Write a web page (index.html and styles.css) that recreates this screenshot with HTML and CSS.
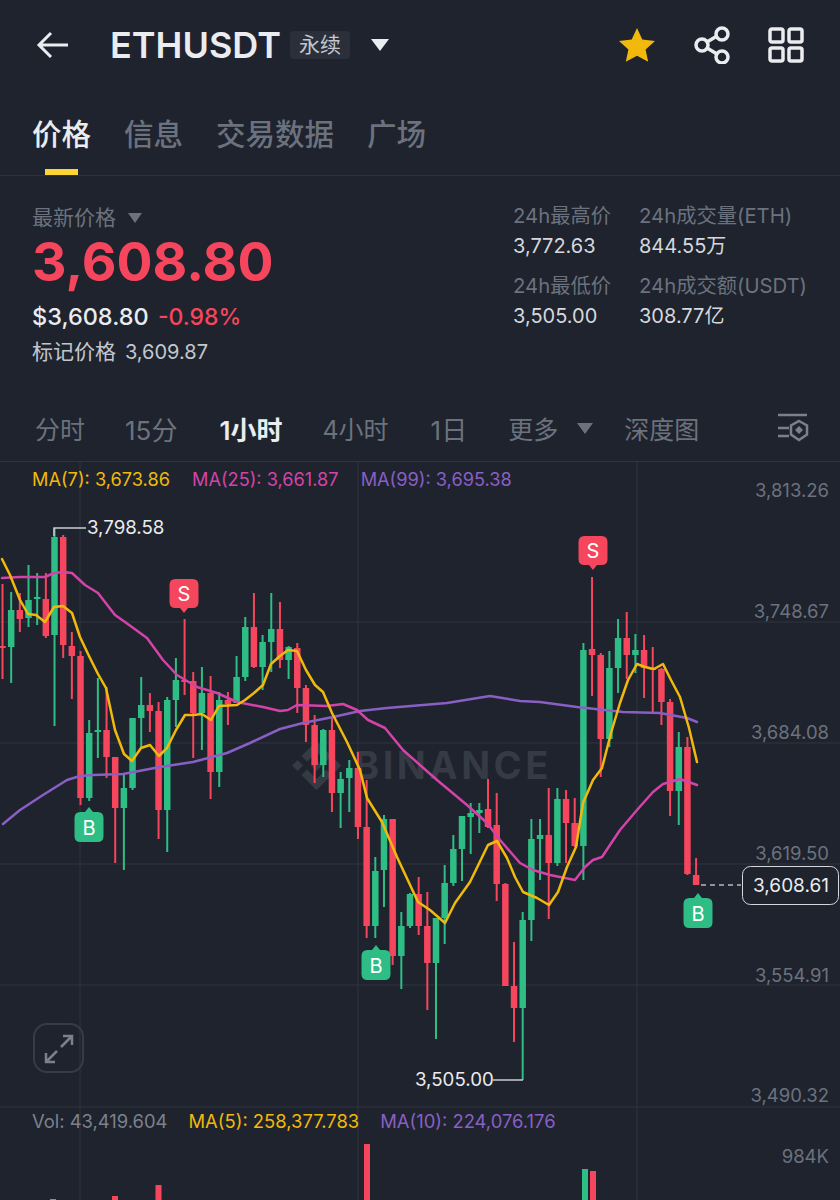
FILE: index.html
```html
<!DOCTYPE html>
<html lang="zh-CN">
<head>
    <meta charset="UTF-8">
    <meta name="viewport" content="width=device-width, initial-scale=1.0">
    <title>ETHUSDT</title>
    <link rel="stylesheet" href="styles.css">
</head>
<body>
    <header class="topbar">
        <svg class="back" width="34" height="28" viewBox="0 0 34 28">
            <path d="M32 14H3M15 2L3 14l12 12"/>
        </svg>
        <span class="symbol">ETHUSDT</span>
        <span class="badge">永续</span>
        <span class="caret caret-title"></span>
        <div class="topbar-icons">
            <svg width="38" height="36" viewBox="0 0 38 36">
                <path class="star" d="M19 1l5.300 11.500 12.700 1.400-9.400 8.500 2.600 12.400L19 28.700 7.800 34.800l2.600-12.400L1 13.900l12.700-1.400z"/>
            </svg>
            <svg class="line-icon" width="38" height="38" viewBox="0 0 38 38">
                <circle cx="29" cy="8" r="6"/>
                <circle cx="9" cy="19" r="6"/>
                <circle cx="29" cy="31" r="6"/>
                <path d="M14 16l10-6M14 22l10 6"/>
            </svg>
            <svg class="line-icon" width="36" height="36" viewBox="0 0 36 36">
                <rect x="2" y="2" width="13" height="13" rx="2"/>
                <rect x="21" y="2" width="13" height="13" rx="2"/>
                <rect x="2" y="21" width="13" height="13" rx="2"/>
                <rect x="21" y="21" width="13" height="13" rx="2"/>
            </svg>
        </div>
    </header>

    <nav class="tabs">
        <a class="tab active">价格</a>
        <a class="tab">信息</a>
        <a class="tab">交易数据</a>
        <a class="tab">广场</a>
    </nav>

    <section class="summary">
        <div class="summary-left">
            <div class="last-label">最新价格 <span class="caret caret-small"></span></div>
            <div class="last-price">3,608.80</div>
            <div class="fiat">$3,608.80 <span class="change">-0.98%</span></div>
            <div class="mark">标记价格 <span>3,609.87</span></div>
        </div>
        <div class="stats">
            <div class="stat"><span class="stat-label">24h最高价</span><span class="stat-value">3,772.63</span></div>
            <div class="stat"><span class="stat-label">24h成交量(ETH)</span><span class="stat-value">844.55万</span></div>
            <div class="stat"><span class="stat-label">24h最低价</span><span class="stat-value">3,505.00</span></div>
            <div class="stat"><span class="stat-label">24h成交额(USDT)</span><span class="stat-value">308.77亿</span></div>
        </div>
    </section>

    <nav class="intervals">
        <a class="interval i-1">分时</a>
        <a class="interval i-2">15分</a>
        <a class="interval i-3 active">1小时</a>
        <a class="interval i-4">4小时</a>
        <a class="interval i-5">1日</a>
        <a class="interval i-6">更多</a>
        <span class="caret caret-more"></span>
        <a class="interval i-7">深度图</a>
        <svg class="depth-icon" width="32" height="30" viewBox="0 0 32 30">
            <path d="M1 2h29M1 15h11M1 23h11"/>
            <path d="M22 8l8 4.500v9L22 27l-8-5.500v-9z"/>
            <path class="depth-dot" d="M22 13l4 4-4 4-4-4z"/>
        </svg>
    </nav>

    <section class="chart">
        <svg id="chartSvg" class="chart-svg" width="840" height="738" viewBox="0 462 840 738">
            <g class="grid">
                <path d="M0 622H840M0 743H840M0 864H840M0 985H840M0 1107H840M80 462V1200M358 462V1200M637 462V1200"/>
            </g>

            <g class="watermark">
                <path transform="translate(292 741) scale(2.05)" d="M16.624 13.9202l2.7175 2.7154-7.353 7.353-7.353-7.352 2.7175-2.7164 4.6355 4.6595 4.6356-4.6595zm4.6366-4.6366L24 12l-2.7154 2.7164L18.5682 12l2.6924-2.7164zm-9.272.001l2.7163 2.6914-2.7164 2.7174v-.001L9.2721 12l2.7164-2.7154zm-9.2722-.001L5.4088 12l-2.6914 2.6924L0 12l2.7164-2.7164zM11.9885.0115l7.353 7.329-2.7174 2.7154-4.6356-4.6356-4.6355 4.6595-2.7174-2.7154 7.353-7.353z"/>
                <text x="354" y="779">BINANCE</text>
            </g>

            <g id="candles"></g>

            <polyline class="ma ma-99" points="3,824 20,810 43,795 67,780 80,776 93,775 123,774 160,767 193,762 227,753 250,743 280,729 303,723 333,717 360,711 387,708 447,703 490,696 520,701 540,702 577,707 623,712 660,713 687,718 697,722"/>
            <polyline class="ma ma-25" points="2,578 20,577 45,577 54,573 63,572 72,573 85,585 98,593 115,615 125,622 147,638 163,660 177,675 197,687 217,693 237,702 263,707 280,711 288,710 297,705 327,706 343,704 357,710 368,720 385,728 403,750 437,780 467,805 487,823 500,840 520,863 533,870 550,875 575,880 585,867 593,860 602,857 620,830 637,810 653,792 663,784 680,779 697,785"/>
            <polyline class="ma ma-7" points="2,559 10,575 20,600 28,614 36,615 45,622 54,607 63,606 72,613 80,637 89,656 98,674 106,688 115,730 124,754 132,761 141,748 150,745 159,756 167,748 176,730 185,715 193,715 202,714 211,720 219,706 237,705 245,700 254,693 263,685 271,664 280,656 288,650 297,651 306,670 315,685 323,692 332,713 347,742 360,770 367,798 382,822 397,857 418,902 430,910 445,923 455,903 470,882 488,845 497,841 507,858 515,877 523,892 537,898 549,905 558,892 567,867 576,847 583,803 593,780 602,768 611,733 620,703 628,680 637,664 645,667 654,669 663,664 671,680 680,697 689,728 697,762"/>

            <path class="leader" d="M54 536V528H86"/>
            <text class="extreme" x="87" y="534">3,798.58</text>
            <path class="leader" d="M493 1080H523"/>
            <text class="extreme" x="415" y="1086">3,505.00</text>

            <g class="axis">
                <text x="829" y="497">3,813.26</text>
                <text x="829" y="618">3,748.67</text>
                <text x="829" y="739">3,684.08</text>
                <text x="829" y="860">3,619.50</text>
                <text x="829" y="982">3,554.91</text>
                <text x="829" y="1102">3,490.32</text>
                <text x="829" y="1163">984K</text>
            </g>

            <path class="price-dash" d="M701 885H741"/>
            <rect class="price-box" x="742.500" y="866.500" width="96" height="38" rx="8"/>
            <text class="price-text" x="791" y="892">3,608.61</text>

            <g id="markers"></g>
        </svg>

        <div class="legend legend-price">
            <span class="ma-7-text">MA(7): 3,673.86</span>
            <span class="ma-25-text">MA(25): 3,661.87</span>
            <span class="ma-99-text">MA(99): 3,695.38</span>
        </div>
        <div class="legend legend-vol">
            <span class="vol-text">Vol: 43,419.604</span>
            <span class="ma-7-text">MA(5): 258,377.783</span>
            <span class="ma-99-text">MA(10): 224,076.176</span>
        </div>

        <button class="expand">
            <svg width="32" height="32" viewBox="0 0 32 32">
                <path d="M29 3L18 14M20 3h9v9M3 29l11-11M3 20v9h9"/>
            </svg>
        </button>
    </section>

    <script src="chart.js"></script>
</body>
</html>
```

FILE: styles.css
```css
* {
    box-sizing: border-box;
}
html, body {
    margin: 0;
    height: 1200px;
    overflow: hidden;
}
body {
    background: #1e232e;
    color: #eaecef;
    font-family: Inter, "Noto Sans CJK SC", sans-serif;
}

/* top bar */
.topbar {
    display: flex;
    align-items: center;
    height: 90px;
    padding: 0 36px 0 36px;
}
.back {
    margin-right: 40px;
    fill: none;
    stroke: #eaecef;
    stroke-width: 3;
}
.symbol {
    font-size: 36px;
    font-weight: 600;
    margin-right: 9px;
}
.badge {
    width: 60px;
    height: 28px;
    line-height: 28px;
    text-align: center;
    font-size: 21px;
    color: #c3c7cd;
    background: #2a2f3a;
    border-radius: 4px;
}
.caret {
    display: inline-block;
    width: 0;
    height: 0;
    border-style: solid;
    border-color: #eaecef transparent transparent transparent;
}
.caret-title {
    margin-left: 21px;
    border-width: 12px 9px 0 9px;
}
.topbar-icons {
    display: flex;
    align-items: center;
    gap: 37px;
    margin-left: auto;
}
.star {
    fill: #f0b90b;
}
.line-icon {
    fill: none;
    stroke: #eaecef;
    stroke-width: 3.5;
}

/* tabs */
.tabs {
    display: flex;
    gap: 33px;
    height: 86px;
    padding: 24px 0 0 32px;
    border-bottom: 1px solid #2b303b;
}
.tab {
    position: relative;
    font-size: 29.500px;
    line-height: 40px;
    color: #6c727d;
    font-weight: 500;
}
.tab.active {
    color: #eaecef;
}
.tab.active::after {
    content: "";
    position: absolute;
    left: 13px;
    top: 55px;
    width: 33px;
    height: 6px;
    background: #fcd535;
}

/* price summary */
.summary {
    display: flex;
    justify-content: space-between;
    height: 227px;
    padding: 28px 0 0 32px;
}
.last-label {
    font-size: 21px;
    line-height: 27px;
    color: #6c727d;
}
.caret-small {
    margin-left: 6px;
    border-width: 10px 7px 0 7px;
    border-top-color: #6c727d;
    vertical-align: 2px;
}
.last-price {
    font-size: 53.500px;
    line-height: 62px;
    font-weight: 700;
    color: #f6465d;
}
.fiat {
    margin-top: 8px;
    font-size: 23.500px;
    line-height: 32px;
    font-weight: 500;
}
.change {
    margin-left: 3px;
    font-size: 23px;
    color: #f6465d;
}
.mark {
    margin-top: 5px;
    font-size: 21px;
    line-height: 28px;
    color: #c3c7cd;
}
.mark span {
    margin-left: 3px;
    font-size: 20px;
}
.stats {
    display: grid;
    grid-template-columns: 126px 200px;
    grid-auto-rows: 70px;
    margin: -3px 0 0 0;
    width: 327px;
}
.stat {
    display: flex;
    flex-direction: column;
    font-size: 20.300px;
    line-height: 30px;
}
.stat-label {
    color: #6c727d;
}
.stat-value {
    color: #d5d8dc;
    font-size: 20px;
}

/* interval row */
.intervals {
    display: flex;
    align-items: center;
    height: 59px;
    padding: 0 0 8px 35px;
    border-bottom: 1px solid #2f343f;
}
.interval {
    font-size: 25px;
    color: #6c727d;
}
.interval.active {
    color: #eaecef;
    font-weight: 600;
}
.i-1 { margin-right: 40px; }
.i-2 { margin-right: 42px; font-size: 26px; }
.i-3 { margin-right: 40px; font-size: 26px; }
.i-4 { margin-right: 42px; }
.i-5 { margin-right: 41px; font-size: 26px; }
.i-6 { margin-right: 19px; }
.caret-more {
    margin-right: 31px;
    border-width: 11px 8px 0 8px;
    border-top-color: #6c727d;
}
.depth-icon {
    margin-left: 78px;
    fill: none;
    stroke: #7b818c;
    stroke-width: 2.500;
}
.depth-dot {
    fill: #7b818c;
    stroke: none;
}

/* chart */
.chart {
    position: relative;
    height: 738px;
}
.chart-svg {
    display: block;
}
.grid path {
    fill: none;
    stroke: #2f343f;
    stroke-width: 1;
}
.watermark {
    fill: #353a44;
}
.watermark text {
    font-size: 38px;
    font-weight: 700;
    letter-spacing: 3.500px;
}
.ma {
    fill: none;
    stroke-width: 2.500;
    stroke-linejoin: round;
    stroke-linecap: round;
}
.ma-7 { stroke: #f0b90b; }
.ma-25 { stroke: #d443a8; }
.ma-99 { stroke: #8a5fc4; }
.wick-up, .body-up { fill: #2ebd85; }
.wick-down, .body-down { fill: #f6465d; }
.leader {
    fill: none;
    stroke: #c9ccd1;
    stroke-width: 1.500;
}
.extreme {
    fill: #eaecef;
    font-size: 18.700px;
}
.axis text {
    fill: #6c727d;
    font-size: 18.500px;
    text-anchor: end;
}
.price-dash {
    stroke: #b7bbc2;
    stroke-width: 1.500;
    stroke-dasharray: 5 4;
}
.price-box {
    fill: #1e232e;
    stroke: #d5d8dc;
    stroke-width: 1;
}
.price-text {
    fill: #eaecef;
    font-size: 19px;
    text-anchor: middle;
}
.marker-s { fill: #f6465d; }
.marker-b { fill: #2ebd85; }
.marker-text {
    fill: #fff;
    font-size: 20px;
    text-anchor: middle;
}

.legend {
    position: absolute;
    left: 32px;
    display: flex;
    gap: 22px;
    font-size: 18.200px;
    line-height: 24px;
}
.legend-price { top: 5px; }
.legend-vol {
    top: 647px;
    gap: 21px;
    font-size: 18.400px;
}
.ma-7-text { color: #f0b90b; }
.ma-25-text { color: #d443a8; }
.ma-99-text { color: #8a5fc4; }
.vol-text { color: #7b818c; }

.expand {
    position: absolute;
    left: 33px;
    top: 561px;
    width: 51px;
    height: 50px;
    padding: 8px;
    background: none;
    border: 2px solid #363b46;
    border-radius: 14px;
}
.expand svg {
    display: block;
    fill: none;
    stroke: #7b818c;
    stroke-width: 2.500;
}
```

FILE: chart.js
```js
const NS = 'http://www.w3.org/2000/svg';

// [wick top, wick bottom, body top, body bottom, up?] in page pixels
const candles = [
    [584, 679, 646, 648, 0], [592, 683, 610, 647, 1], [593, 632, 610, 619, 0], [565, 627, 600, 618, 1],
    [573, 625, 597, 599, 1], [573, 638, 599, 636, 0], [528, 726, 537, 635, 1], [535, 658, 537, 645, 0],
    [632, 699, 646, 656, 0], [651, 805, 656, 798, 0], [720, 801, 733, 798, 1], [678, 758, 730, 732, 1],
    [687, 778, 730, 757, 0], [757, 863, 757, 808, 0], [775, 870, 788, 808, 1], [718, 790, 718, 788, 1],
    [677, 747, 705, 718, 1], [693, 732, 705, 711, 0], [702, 839, 711, 810, 0], [697, 852, 700, 810, 1],
    [658, 727, 680, 700, 1], [619, 695, 680, 682, 0], [672, 758, 681, 713, 0], [667, 750, 693, 713, 1],
    [676, 799, 693, 772, 0], [692, 787, 700, 772, 1], [692, 725, 700, 704, 0], [656, 703, 677, 703, 1],
    [617, 681, 627, 677, 1], [593, 668, 627, 667, 0], [635, 690, 642, 667, 1], [593, 672, 629, 642, 1],
    [602, 668, 629, 660, 0], [646, 679, 647, 660, 1], [643, 713, 648, 688, 0], [685, 742, 688, 725, 0],
    [715, 783, 725, 765, 0], [729, 777, 730, 765, 1], [717, 812, 730, 793, 0], [772, 828, 779, 793, 1],
    [760, 812, 768, 778, 1], [752, 839, 768, 827, 0], [780, 938, 827, 926, 0], [857, 938, 871, 926, 1],
    [815, 907, 819, 870, 1], [819, 965, 819, 956, 0], [912, 989, 926, 956, 1], [893, 928, 894, 926, 1],
    [877, 935, 894, 926, 0], [892, 1010, 926, 963, 0], [918, 1039, 918, 963, 1], [865, 944, 883, 918, 1],
    [835, 886, 849, 883, 1], [816, 881, 816, 849, 1], [803, 854, 813, 817, 1], [803, 833, 810, 813, 1],
    [779, 828, 809, 827, 0], [793, 901, 825, 884, 0], [883, 986, 884, 986, 0], [942, 1042, 986, 1008, 0],
    [1080, 912, 920, 1008, 1], [819, 941, 839, 920, 1], [819, 880, 835, 839, 1], [788, 919, 835, 863, 0],
    [788, 866, 799, 863, 1], [790, 863, 799, 823, 0], [798, 847, 823, 846, 0], [643, 880, 650, 846, 1],
    [577, 696, 649, 655, 0], [653, 777, 655, 739, 0], [651, 747, 668, 739, 1], [619, 693, 638, 668, 1],
    [612, 679, 638, 655, 0], [634, 673, 650, 655, 1], [635, 698, 650, 668, 0], [647, 712, 668, 670, 0],
    [668, 725, 669, 702, 0], [699, 816, 702, 791, 0], [732, 825, 747, 791, 1], [737, 875, 747, 874, 0],
    [858, 885, 875, 885, 0]
];

// volume bars at the bottom of the picture
const volumes = [
    [53, 1199, 1], [115, 1196, 0], [158.5, 1185, 0], [367, 1144, 0], [585, 1169, 1], [593, 1171, 0]
];

const markers = [
    { x: 184, top: 579, side: 's' },
    { x: 593, top: 536, side: 's' },
    { x: 89, top: 807, side: 'b' },
    { x: 376, top: 945, side: 'b' },
    { x: 698, top: 893, side: 'b' }
];

function el(name, attrs, parent) {
    const node = document.createElementNS(NS, name);
    for (const key in attrs) node.setAttribute(key, attrs[key]);
    parent.appendChild(node);
    return node;
}

const candleGroup = document.getElementById('candles');
candles.forEach((c, i) => {
    const x = 2.5 + 8.67 * i;
    const top = Math.min(c[0], c[1]);
    const bottom = Math.max(c[0], c[1]);
    const dir = c[4] ? 'up' : 'down';
    el('rect', { x: x - 1, y: top, width: 2, height: bottom - top, class: 'wick-' + dir }, candleGroup);
    el('rect', { x: x - 3.25, y: c[2], width: 6.5, height: c[3] - c[2], class: 'body-' + dir }, candleGroup);
});

volumes.forEach((v) => {
    el('rect', { x: v[0] - 3, y: v[1], width: 6, height: 1200 - v[1], class: 'body-' + (v[2] ? 'up' : 'down') }, candleGroup);
});

const markerGroup = document.getElementById('markers');
markers.forEach((m) => {
    const l = m.x - 14.5;
    const r = m.x + 14.5;
    let d;
    let textY;
    if (m.side === 's') {
        // box first, pointer under it
        const t = m.top;
        const b = t + 29;
        d = `M${l + 6} ${t}H${r - 6}Q${r} ${t} ${r} ${t + 6}V${b - 6}Q${r} ${b} ${r - 6} ${b}H${m.x + 4}L${m.x} ${b + 5}L${m.x - 4} ${b}H${l + 6}Q${l} ${b} ${l} ${b - 6}V${t + 6}Q${l} ${t} ${l + 6} ${t}Z`;
        textY = t + 22;
    } else {
        // pointer on top, box under it
        const t = m.top + 5;
        const b = t + 30;
        d = `M${l + 6} ${t}H${m.x - 4}L${m.x} ${m.top}L${m.x + 4} ${t}H${r - 6}Q${r} ${t} ${r} ${t + 6}V${b - 6}Q${r} ${b} ${r - 6} ${b}H${l + 6}Q${l} ${b} ${l} ${b - 6}V${t + 6}Q${l} ${t} ${l + 6} ${t}Z`;
        textY = t + 23;
    }
    el('path', { d: d, class: 'marker-' + m.side }, markerGroup);
    const label = el('text', { x: m.x, y: textY, class: 'marker-text' }, markerGroup);
    label.textContent = m.side.toUpperCase();
});
```
